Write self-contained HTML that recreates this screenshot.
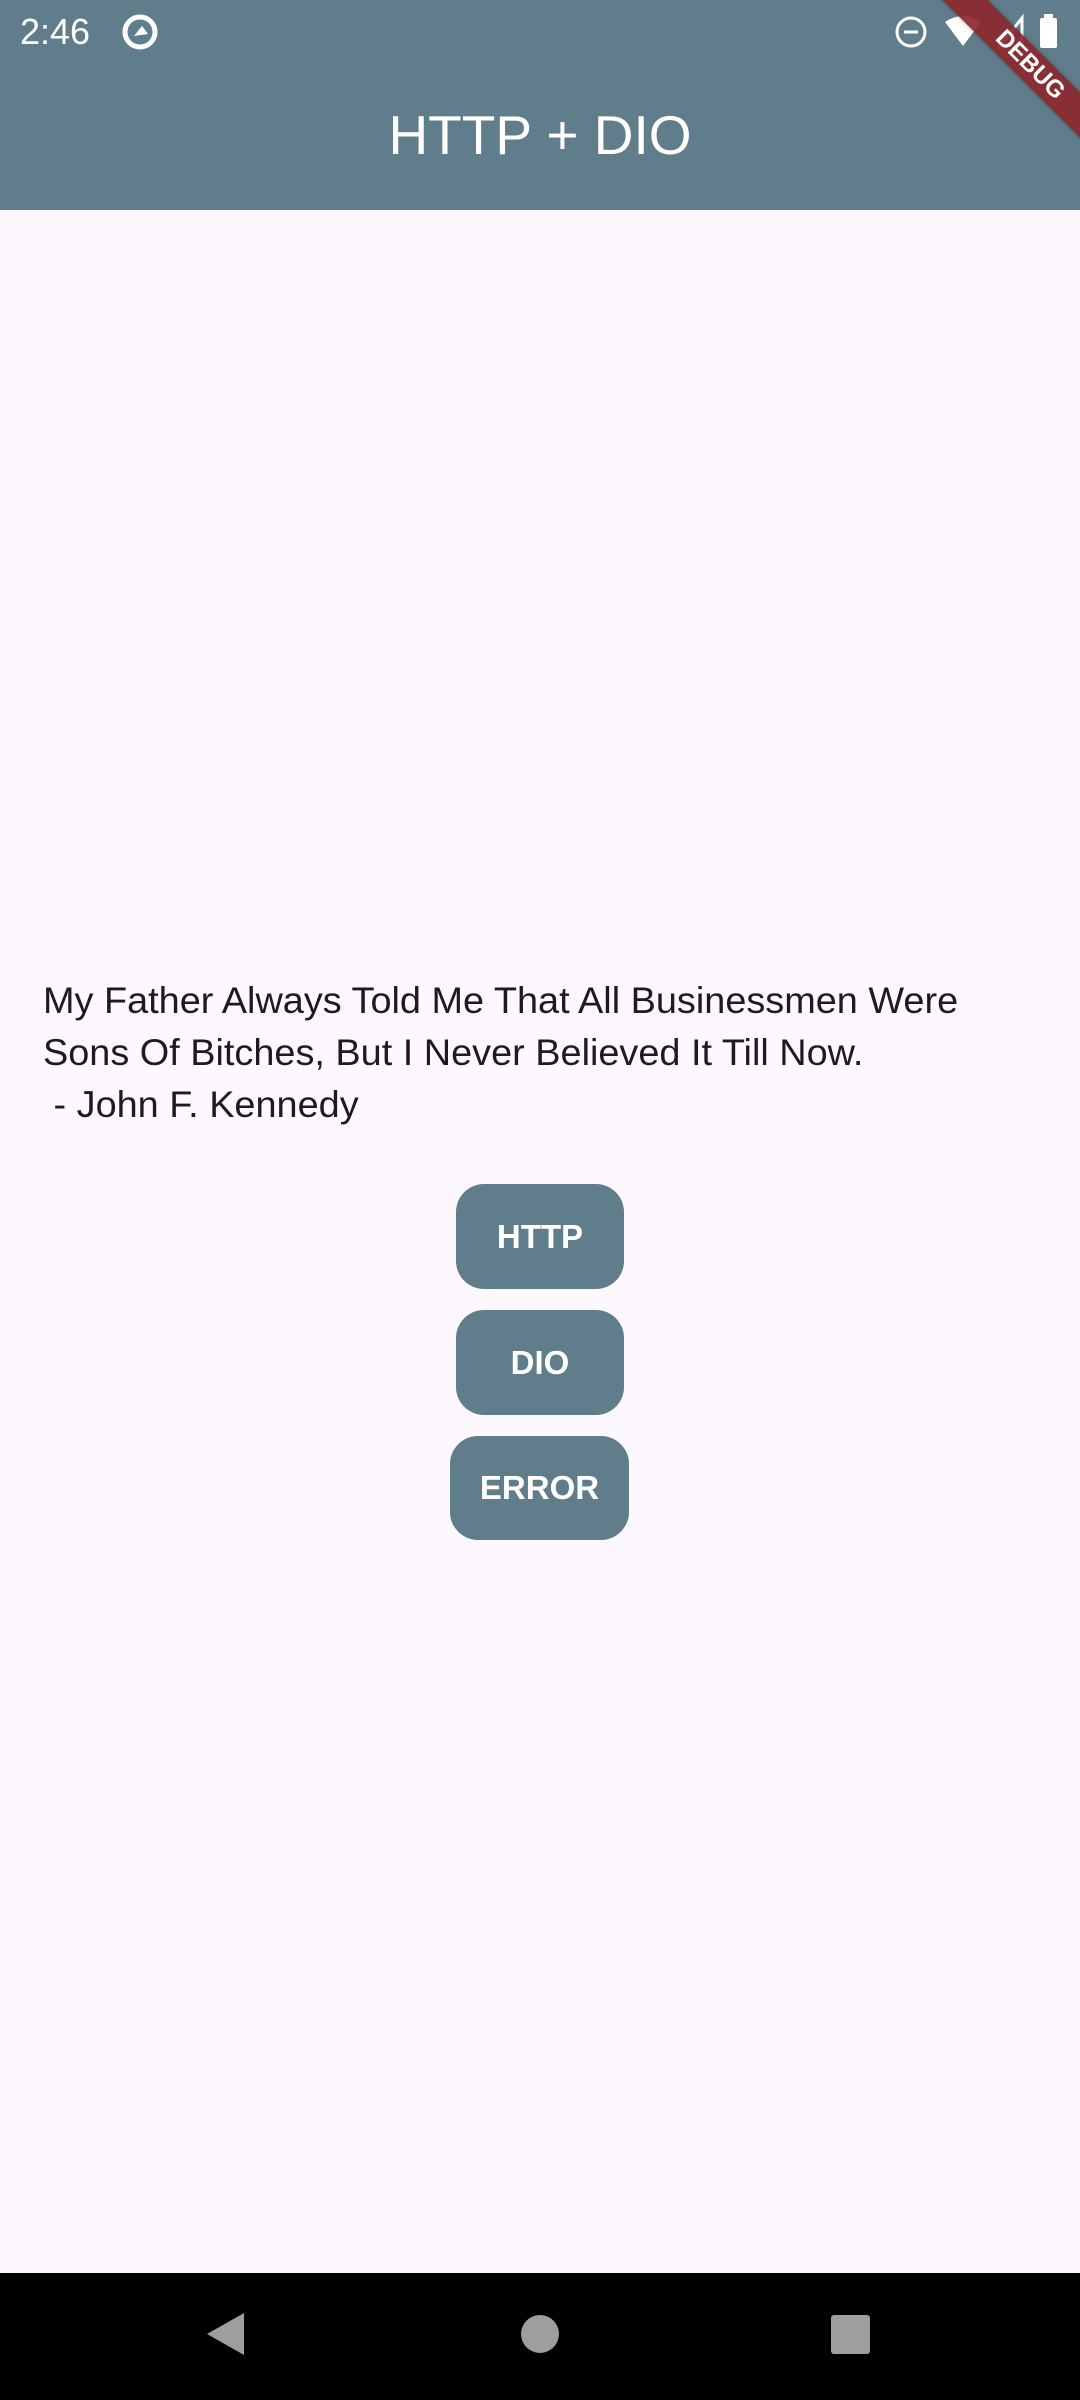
<!DOCTYPE html>
<html><head><meta charset="utf-8"><style>
html,body{margin:0;padding:0}
body{width:1080px;height:2400px;position:relative;background:#fdf7fe;font-family:"Liberation Sans",sans-serif;overflow:hidden}
.bar{position:absolute;left:0;top:0;width:1080px;height:210px;background:#607d8b}
.title{position:absolute;left:0;width:1080px;top:100px;text-align:center;color:#fff;font-size:55px;line-height:70px}
.time{position:absolute;left:20px;top:10px;color:#fff;font-size:36px;line-height:44px}
.quote{position:absolute;left:43px;top:975px;font-size:37px;line-height:52px;color:#1d1b20;white-space:pre;transform-origin:0 0;transform:scaleX(1.023)}
.btn{position:absolute;background:#607d8b;border-radius:28px;color:#fff;font-weight:bold;font-size:33px;display:flex;align-items:center;justify-content:center}
.nav{position:absolute;left:0;top:2273px;width:1080px;height:127px;background:#000}
.ribbon{position:absolute;left:880px;top:49px;width:300px;height:32px;background:rgba(140,40,46,0.92);transform:rotate(45deg);color:#fff;font-weight:bold;font-size:24px;line-height:32px;text-align:center;box-shadow:0 0 4px rgba(0,0,0,.3)}
</style></head><body>
<div class="bar"></div>
<div class="time">2:46</div>
<svg style="position:absolute;left:120px;top:12px" width="40" height="40" viewBox="0 0 40 40"><circle cx="20" cy="20" r="15" fill="none" stroke="#fff" stroke-width="5"/><path d="M14 24 L22 14 L28 22 Z" fill="#fff"/></svg>
<svg style="position:absolute;left:893px;top:14px" width="36" height="36" viewBox="0 0 36 36"><circle cx="18" cy="18" r="14" fill="none" stroke="#fff" stroke-width="3"/><rect x="11" y="16.5" width="14" height="3" fill="#fff"/></svg>
<svg style="position:absolute;left:943px;top:12px" width="120" height="40" viewBox="0 0 120 40"><path d="M2 10 Q20 -2 38 10 L20 34 Z" fill="#fff"/><path d="M79 6 L79 34 L57 34 Z" fill="none" stroke="#fff" stroke-width="3"/><rect x="97" y="6" width="17" height="30" rx="2" fill="#fff"/><rect x="101" y="2" width="9" height="5" fill="#fff"/></svg>
<div class="ribbon">DEBUG</div>
<div class="title">HTTP + DIO</div>
<div class="quote">My Father Always Told Me That All Businessmen Were
Sons Of Bitches, But I Never Believed It Till Now.
 - John F. Kennedy</div>
<div class="btn" style="left:456px;top:1184px;width:168px;height:105px">HTTP</div>
<div class="btn" style="left:456px;top:1310px;width:168px;height:105px">DIO</div>
<div class="btn" style="left:450px;top:1436px;width:179px;height:104px">ERROR</div>
<div class="nav"></div>
<svg style="position:absolute;left:0;top:2273px" width="1080" height="127" viewBox="0 0 1080 127"><path d="M244 40 L244 82 L207 61 Z" fill="#9e9e9e"/><circle cx="540" cy="61" r="19" fill="#9e9e9e"/><rect x="831" y="42" width="39" height="39" rx="3" fill="#9e9e9e"/></svg>
</body></html>
